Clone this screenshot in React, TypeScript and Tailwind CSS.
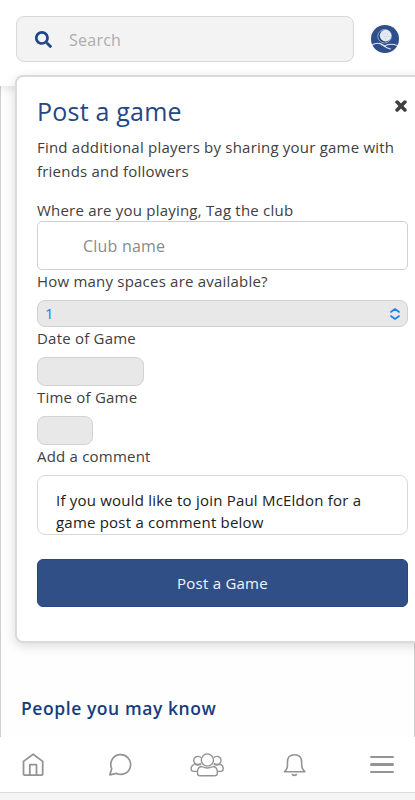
import React from "react";
import { FaSearch } from "react-icons/fa";

function Logo() {
  return (
    <svg viewBox="0 0 28 28" className="size-7 shrink-0">
      <circle cx="14" cy="14" r="14" fill="#2f4f8a" />
      <circle cx="13.6" cy="11.2" r="6.7" fill="#1b3c7c" stroke="#b9c5dc" strokeWidth="0.8" />
      <circle cx="14.6" cy="10.6" r="5.8" fill="#e6eaf2" />
      <g fill="#bcc5d6">
        <circle cx="12" cy="9" r="0.6" />
        <circle cx="14.3" cy="8" r="0.6" />
        <circle cx="16.6" cy="9" r="0.6" />
        <circle cx="13.2" cy="11.4" r="0.6" />
        <circle cx="15.6" cy="11.6" r="0.6" />
        <circle cx="17.8" cy="11.6" r="0.6" />
        <circle cx="14.4" cy="13.8" r="0.6" />
      </g>
      <path
        d="M1.2 19.8C5 17.6 8 17.6 11 19.8C14 22 16 23.6 19.5 24M13.2 21.4C17 18.2 21 18.6 26.6 20.4M8 18.4C10.4 18.6 12 20 14.4 21"
        fill="none"
        stroke="#dfe5f0"
        strokeWidth="1.1"
        strokeLinecap="round"
      />
    </svg>
  );
}

function BottomNav() {
  return (
    <nav className="relative flex h-14 shrink-0 items-center border-b border-[#dcdcdc] bg-white text-[#949494]">
      <svg viewBox="0 0 22 24" className="ml-[22px] h-6 w-[22px]" fill="none" stroke="currentColor" strokeWidth="1.8" strokeLinejoin="round">
        <path d="M1.5 8.4L11.2 1.2L20.7 8.4V20.4Q20.7 22.2 18.9 22.2H3.3Q1.5 22.2 1.5 20.4Z" />
        <path d="M7.8 22V11.7H14.5V22" />
      </svg>
      <svg viewBox="0 0 24 24" className="ml-[64px] size-6" fill="none" stroke="currentColor" strokeWidth="1.7" strokeLinejoin="round">
        <path d="M1.9 21.8L3.7 15.6A9.9 9.9 0 1 1 8.4 20.4Z" />
      </svg>
      <svg viewBox="0 0 34 24" className="ml-[58px] h-6 w-[34px]" fill="none" stroke="currentColor" strokeWidth="1.4" strokeLinejoin="round">
        <circle cx="17.4" cy="7" r="6.1" />
        <path d="M11.7 13.5C9.2 13.9 7.6 15.8 7.5 18.4V20.2Q7.5 22.8 10.1 22.8H24.7Q27.3 22.8 27.3 20.2V18.4C27.2 15.8 25.6 13.9 23.1 13.5Q17.4 16.4 11.7 13.5Z" />
        <path d="M11 4.8A4.1 4.1 0 1 0 10.8 10.3M23.8 4.8A4.1 4.1 0 1 1 24 10.3" />
        <path d="M4.6 11.2C2.2 12.2 1.1 13.8 1.1 15.8Q1.1 18.4 3.8 18.4H7.6M30.2 11.2C32.6 12.2 33.2 13.8 33.2 15.8Q33.2 18.4 30.8 18.4H27.2M5 11.3Q7.5 12.6 11.2 11.3M23.7 11.3Q27.2 12.6 29.8 11.3" />
      </svg>
      <svg viewBox="0 0 24 24" className="ml-[59px] size-6" fill="none" stroke="currentColor" strokeWidth="1.6" strokeLinejoin="round">
        <path d="M1.4 18.8C4.8 15.8 4.5 13.5 4.5 8.9C4.5 4.2 7.4 1.7 11.5 1.7C15.6 1.7 18.6 4.2 18.6 8.9C18.6 13.5 18.6 15.8 21.9 18.8Z" />
        <path d="M9.2 20.9C9.6 22.9 13.2 22.9 13.6 20.9" strokeWidth="1.8" />
      </svg>
      <div className="ml-[63px] flex w-6 flex-col gap-[5.4px]">
        <span className="h-[2.3px] rounded-full bg-current" />
        <span className="h-[2.3px] rounded-full bg-current" />
        <span className="h-[2.3px] rounded-full bg-current" />
      </div>
    </nav>
  );
}

function PostGameDialog() {
  return (
    <section className="absolute top-[75px] left-[15px] h-[568px] w-[420px] rounded-lg border-2 border-[#dadada] bg-white pt-5 pl-5 text-[15px] tracking-[0.21px] whitespace-nowrap text-[#404040] shadow-[0_3px_12px_rgba(0,0,0,0.14)]">
      <div className="flex w-[371px] flex-col">
        <div className="-mt-0.5 flex h-8 items-center">
          <h1 className="text-[25px] leading-8 tracking-[0.22px] text-[#244887]">Post a game</h1>
          <svg viewBox="0 0 12 12" className="-mt-2.5 mr-[1.5px] ml-auto size-3" stroke="#404040" strokeWidth="3.6" strokeLinecap="round">
            <path d="M2.1 2.1L9.9 9.9M9.9 2.1L2.1 9.9" />
          </svg>
        </div>
        <p className="mt-2 leading-6">
          Find additional players by sharing your game with
          <br />
          friends and followers
        </p>
        <label className="mt-[17px] h-[21px] leading-5">Where are you playing, Tag the club</label>
        <div className="flex h-[49px] items-center rounded-[5px] border border-[#d0d0d0] pl-[45px] text-base text-[#8a8a8a]">Club name</div>
        <label className="mt-px h-[29px] leading-5">How many spaces are available?</label>
        <div className="flex h-[27px] items-center justify-between rounded-lg border border-[#d0d0d0] bg-[#e8e8e8] pr-[7px] pl-[7px] text-[#1681ef]">
          <span>1</span>
          <svg viewBox="0 0 10 12" className="h-3 w-[10px]" fill="none" stroke="currentColor" strokeWidth="1.6" strokeLinecap="round" strokeLinejoin="round">
            <path d="M.9 4L5 1L9.1 4M.9 8L5 11L9.1 8" />
          </svg>
        </div>
        <label className="mt-px h-[29px] leading-5">Date of Game</label>
        <div className="h-[29px] w-[107px] rounded-lg border border-[#d3d3d3] bg-[#e8e8e8]" />
        <label className="mt-px h-[29px] leading-5">Time of Game</label>
        <div className="h-[29px] w-14 rounded-lg border border-[#d3d3d3] bg-[#e8e8e8]" />
        <label className="mt-px h-[29px] leading-5">Add a comment</label>
        <div className="h-[60px] overflow-hidden rounded-lg border border-[#d8d8d8] pt-[13px] pl-[18px] leading-[22px] text-[#202020]">
          If you would like to join Paul McEldon for a
          <br />
          game post a comment below
        </div>
        <button className="mt-6 h-12 rounded-md border border-[#264680] bg-[#314f87] tracking-[0.23px] text-[#f2f5fa]">Post a Game</button>
      </div>
    </section>
  );
}

export default function App() {
  return (
    <main className="relative flex h-[800px] w-[415px] flex-col overflow-hidden bg-[#f4f4f5] font-['Open_Sans',sans-serif]">
      <header className="relative flex h-[86px] shrink-0 items-start bg-white pt-4 pl-4 shadow-[0_2px_10px_rgba(0,0,0,0.13)]">
        <div className="flex h-[46px] w-[338px] items-center rounded-lg border border-[#d8d8d8] bg-[#f3f3f3] pl-[18px]">
          <FaSearch className="size-[17px] text-[#1d468b]" />
          <span className="mt-px ml-[17px] text-base tracking-[0.25px] text-[#acacac]">Search</span>
        </div>
        <div className="mt-[9px] ml-[17px]">
          <Logo />
        </div>
      </header>
      <div className="flex flex-1 items-end border-x border-[#cfcfcf] bg-[#fefefe] pb-[17px] pl-[20px]">
        <h2 className="text-[17.5px] leading-6 font-[550] tracking-[0.57px] text-[#163c80]">People you may know</h2>
      </div>
      <BottomNav />
      <div className="h-[7px] shrink-0 bg-[#f4f4f5]" />
      <PostGameDialog />
    </main>
  );
}
